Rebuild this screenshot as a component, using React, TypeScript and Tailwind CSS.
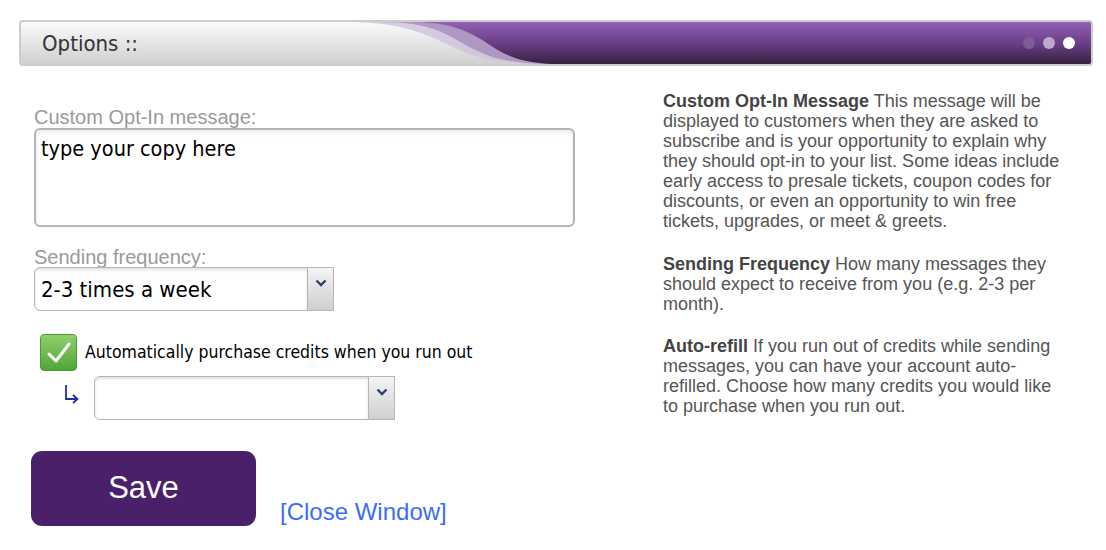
import React from "react";

const tahoma = { fontFamily: '"DejaVu Sans Condensed", "DejaVu Sans", sans-serif' };

function Chevron() {
  return (
    <svg width="12" height="8" viewBox="0 0 12 8">
      <path d="M1.5 1.5 L6 6 L10.5 1.5" fill="none" stroke="#2c3e7c" strokeWidth="2.4" />
    </svg>
  );
}

function Select({ value, w }: { value: string; w: string }) {
  return (
    <div className={`flex h-[44px] ${w}`}>
      <div className="flex-1 flex items-center rounded-l-[6px] border border-[#b5b5b5] bg-white pl-[6px] shadow-[inset_0_2px_3px_rgba(0,0,0,0.12)]">
        <span className="text-[22px] text-black" style={tahoma}>{value}</span>
      </div>
      <div className="w-[26px] flex items-start justify-center pt-[11px] border border-l-0 border-[#b5b5b5] bg-gradient-to-b from-[#f4f4f4] to-[#cfcfcf]">
        <Chevron />
      </div>
    </div>
  );
}

export default function App() {
  return (
    <div className="w-[1106px] h-[550px] bg-white" style={{ fontFamily: '"Liberation Sans", Arial, sans-serif' }}>
      <div className="pt-[20px] pl-[19px]">
        <div className="relative w-[1074px] h-[46px] rounded-[4px] border-2 border-[#cdcdcd] overflow-hidden bg-gradient-to-b from-[#fbfbfb] to-[#d0d0d0]">
          <svg className="absolute inset-0" width="100%" height="100%" viewBox="0 0 1070 42" preserveAspectRatio="none">
            <defs>
              <linearGradient id="pg" x1="0" y1="0" x2="0" y2="1">
                <stop offset="0" stopColor="#9360b4" />
                <stop offset="0.5" stopColor="#6a4088" />
                <stop offset="1" stopColor="#38203f" />
              </linearGradient>
            </defs>
            <path d="M322 0 C380 0 400 10 430 24 C455 36 470 40 520 42 L1070 42 L1070 0 Z" fill="#cfc0dc" opacity="0.8" />
            <path d="M360 0 C410 0 425 12 450 26 C470 36 485 40 520 42 L1070 42 L1070 0 Z" fill="#a58cbc" opacity="0.8" />
            <path d="M398 0 C440 2 455 14 475 27 C492 37 505 40 530 42 L1070 42 L1070 0 Z" fill="url(#pg)" />
          </svg>
          <div className="relative flex h-full items-center pl-[21px]">
            <span className="text-[22px] text-[#333]" style={tahoma}>Options ::</span>
          </div>
          <div className="absolute right-[16px] top-[15px] flex gap-[8px]">
            <div className="w-[12px] h-[12px] rounded-full bg-[#7b5d94]" />
            <div className="w-[12px] h-[12px] rounded-full bg-[#bcaacd]" />
            <div className="w-[12px] h-[12px] rounded-full bg-white" />
          </div>
        </div>
      </div>

      <div className="flex pt-[41px]">
        <div className="w-[663px] pl-[34px]">
          <div className="text-[20px] leading-[20px] text-[#9a9a9a]">Custom Opt-In message:</div>
          <div className="mt-[1px] w-[541px] h-[99px] rounded-[6px] border-2 border-[#b5b5b5] bg-white shadow-[inset_0_3px_4px_rgba(0,0,0,0.08)] px-[5px] pt-[3px]">
            <span className="text-[21.5px] text-black" style={tahoma}>type your copy here</span>
          </div>
          <div className="mt-[20px] text-[20px] leading-[20px] text-[#9a9a9a]">Sending frequency:</div>
          <Select value="2-3 times a week" w="w-[300px]" />
          <div className="mt-[23px] ml-[6px] flex items-center">
            <div className="w-[37px] h-[37px] rounded-[4px] border border-[#4f9a36] bg-gradient-to-b from-[#8fd06b] to-[#4fa636] flex items-center justify-center">
              <svg width="26" height="24" viewBox="0 0 26 24">
                <path d="M3 13 L10 20 L23 3" fill="none" stroke="white" strokeWidth="3" strokeLinecap="round" strokeLinejoin="round" />
              </svg>
            </div>
            <span className="ml-[8px] text-[17.5px] text-black" style={tahoma}>Automatically purchase credits when you run out</span>
          </div>
          <div className="mt-[5px] flex items-start">
            <div className="w-[60px] pl-[30px] pt-[8px]">
              <svg width="16" height="20" viewBox="0 0 16 20">
                <path d="M2 1 L2 15 L12 15" fill="none" stroke="#1e2fa8" strokeWidth="1.8" />
                <path d="M9 11 L13.5 15 L9 19" fill="none" stroke="#1e2fa8" strokeWidth="1.8" />
              </svg>
            </div>
            <Select value="" w="w-[301px]" />
          </div>
          <div className="mt-[31px] flex items-end">
            <button className="ml-[-3px] w-[225px] h-[75px] rounded-[11px] bg-[#4a2169] text-white text-[31px]">Save</button>
            <a className="ml-[24px] mb-[0px] text-[24px] leading-[28px] text-[#3d6df2]">[Close Window]</a>
          </div>
        </div>
        <div className="w-[400px] mt-[-16px] text-[18px] leading-[20px] text-[#555]">
          <p><b className="text-[#444]">Custom Opt-In Message</b> This message will be displayed to customers when they are asked to subscribe and is your opportunity to explain why they should opt-in to your list. Some ideas include early access to presale tickets, coupon codes for discounts, or even an opportunity to win free tickets, upgrades, or meet &amp; greets.</p>
          <p className="mt-[23px]"><b className="text-[#444]">Sending Frequency</b> How many messages they should expect to receive from you (e.g. 2-3 per month).</p>
          <p className="mt-[22px]"><b className="text-[#444]">Auto-refill</b> If you run out of credits while sending messages, you can have your account auto-refilled. Choose how many credits you would like to purchase when you run out.</p>
        </div>
      </div>
    </div>
  );
}
